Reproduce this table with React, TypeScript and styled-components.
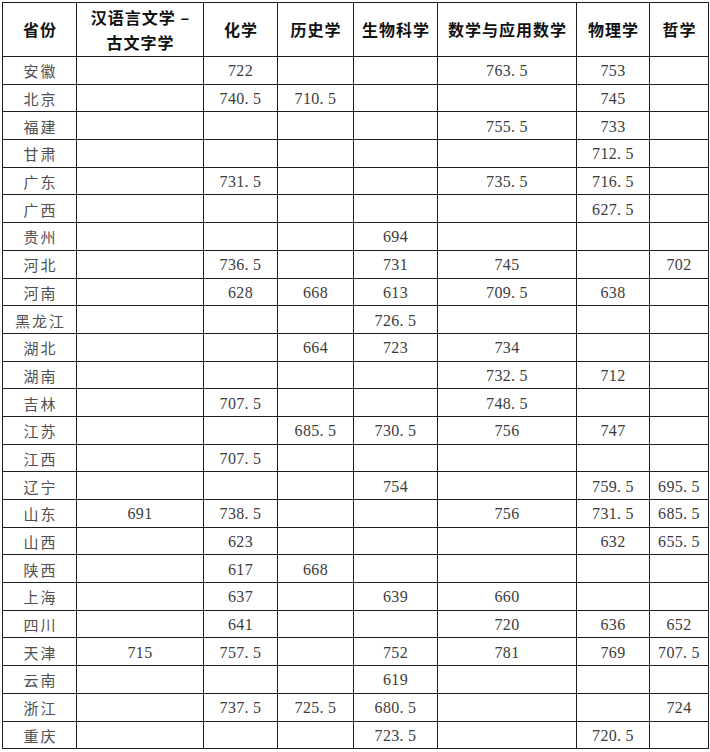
import styled, { createGlobalStyle } from 'styled-components';

const GlobalStyle = createGlobalStyle`
	html, body {
		margin: 0;
		padding: 0;
		background: #fff;
	}
`;

const Page = styled.main`
	padding: 2px 0 0 2px;
`;

const Table = styled.table`
	border-collapse: collapse;
	table-layout: fixed;
	width: 706px;
	border: 1.5px solid #1e1e1e;
	font-family: "Liberation Serif", "Noto Sans CJK SC", serif;
	color: #3a3a3a;
`;

const HeadCell = styled.th`
	height: 53px;
	padding: 0 0 0 1px;
	border: 1px solid #1e1e1e;
	font-family: "Noto Sans CJK SC", sans-serif;
	font-size: 16px;
	font-weight: 700;
	line-height: 25px;
	letter-spacing: 1px;
	color: #111;
	text-align: center;
	vertical-align: middle;
`;

const Cell = styled.td<{ $name?: boolean }>`
	height: 24.7px;
	padding: ${(p) => (p.$name ? '2px 0 0 2px' : '2px 0 0')};
	border: 1px solid #1e1e1e;
	text-align: center;
	vertical-align: middle;
	font-family: ${(p) => (p.$name ? '"Noto Sans CJK SC", sans-serif' : '"Liberation Serif", serif')};
	font-size: ${(p) => (p.$name ? '15px' : '16px')};
	letter-spacing: ${(p) => (p.$name ? '2px' : '0.3px')};
	line-height: 20px;
	color: ${(p) => (p.$name ? '#505050' : '#3c3c3c')};
	white-space: nowrap;
`;

const widths = [74, 127, 74, 76, 84, 139, 73, 59];

const headers = ['省份', '汉语言文学 –\n古文字学', '化学', '历史学', '生物科学', '数学与应用数学', '物理学', '哲学'];

// 汉语言, 化学, 历史, 生物, 数学, 物理, 哲学
const rows: [string, (number | null)[]][] = [
	['安徽', [null, 722, null, null, 763.5, 753, null]],
	['北京', [null, 740.5, 710.5, null, null, 745, null]],
	['福建', [null, null, null, null, 755.5, 733, null]],
	['甘肃', [null, null, null, null, null, 712.5, null]],
	['广东', [null, 731.5, null, null, 735.5, 716.5, null]],
	['广西', [null, null, null, null, null, 627.5, null]],
	['贵州', [null, null, null, 694, null, null, null]],
	['河北', [null, 736.5, null, 731, 745, null, 702]],
	['河南', [null, 628, 668, 613, 709.5, 638, null]],
	['黑龙江', [null, null, null, 726.5, null, null, null]],
	['湖北', [null, null, 664, 723, 734, null, null]],
	['湖南', [null, null, null, null, 732.5, 712, null]],
	['吉林', [null, 707.5, null, null, 748.5, null, null]],
	['江苏', [null, null, 685.5, 730.5, 756, 747, null]],
	['江西', [null, 707.5, null, null, null, null, null]],
	['辽宁', [null, null, null, 754, null, 759.5, 695.5]],
	['山东', [691, 738.5, null, null, 756, 731.5, 685.5]],
	['山西', [null, 623, null, null, null, 632, 655.5]],
	['陕西', [null, 617, 668, null, null, null, null]],
	['上海', [null, 637, null, 639, 660, null, null]],
	['四川', [null, 641, null, null, 720, 636, 652]],
	['天津', [715, 757.5, null, 752, 781, 769, 707.5]],
	['云南', [null, null, null, 619, null, null, null]],
	['浙江', [null, 737.5, 725.5, 680.5, null, null, 724]],
	['重庆', [null, null, null, 723.5, null, 720.5, null]],
];

const fmt = (v: number | null) => (v == null ? '' : String(v).replace('.', '. '));

export default function App() {
	return (
		<Page>
			<GlobalStyle />
			<Table>
				<colgroup>
					{widths.map((w, i) => (
						<col key={i} style={{ width: w }} />
					))}
				</colgroup>
				<thead>
					<tr>
						{headers.map((h) => (
							<HeadCell key={h}>
								{h.split('\n').map((line, i) => (
									<div key={i}>{line}</div>
								))}
							</HeadCell>
						))}
					</tr>
				</thead>
				<tbody>
					{rows.map(([name, values]) => (
						<tr key={name}>
							<Cell $name>{name}</Cell>
							{values.map((v, i) => (
								<Cell key={i}>{fmt(v)}</Cell>
							))}
						</tr>
					))}
				</tbody>
			</Table>
		</Page>
	);
}
